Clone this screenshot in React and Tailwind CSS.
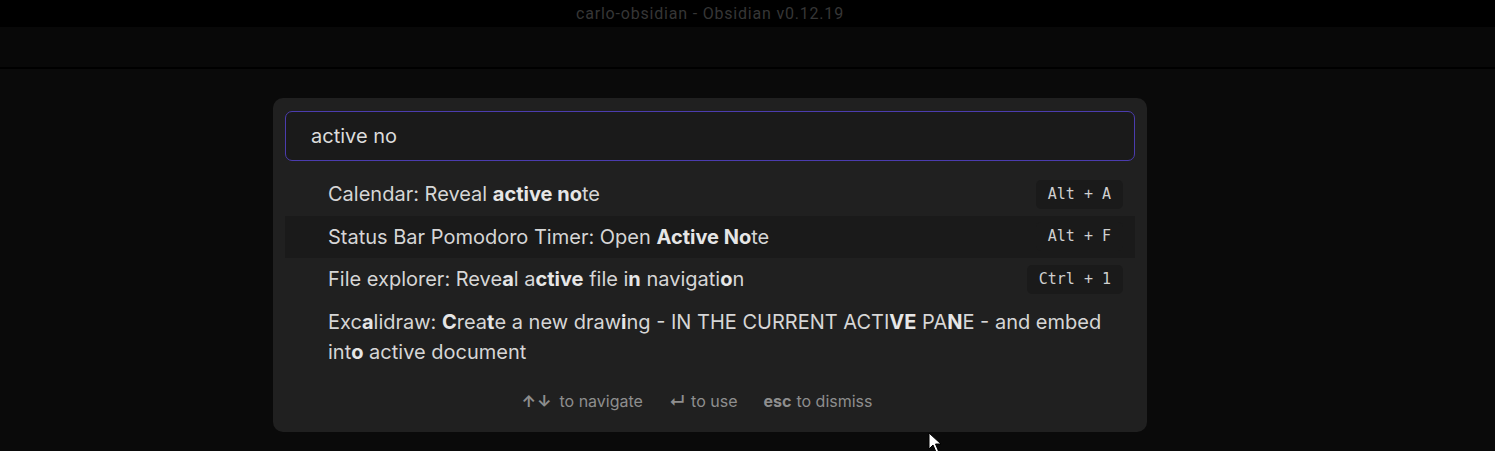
import React from "react";

const items = [
  {
    parts: [["Calendar: Reveal ", false], ["active no", true], ["te", false]],
    hotkey: "Alt + A",
  },
  {
    parts: [["Status Bar Pomodoro Timer: Open ", false], ["Active No", true], ["te", false]],
    hotkey: "Alt + F",
    selected: true,
  },
  {
    parts: [
      ["File explorer: Reve", false],
      ["a", true],
      ["l a", false],
      ["ctive", true],
      [" file i", false],
      ["n", true],
      [" navigati", false],
      ["o", true],
      ["n", false],
    ],
    hotkey: "Ctrl + 1",
  },
  {
    lines: [
      [
        ["Exc", false],
        ["a", true],
        ["lidraw: ", false],
        ["C", true],
        ["rea", false],
        ["t", true],
        ["e a new draw", false],
        ["i", true],
        ["ng - IN THE CURRENT ACTI", false],
        ["VE", true],
        [" PA", false],
        ["N", true],
        ["E - and embed", false],
      ],
      [
        ["int", false],
        ["o", true],
        [" active document", false],
      ],
    ],
  },
];

function Parts({ parts }) {
  return parts.map(([t, hl], i) =>
    hl ? (
      <span key={i} className="font-bold text-[#e6e6e6]">
        {t}
      </span>
    ) : (
      <span key={i}>{t}</span>
    )
  );
}

function Suggestion({ item }) {
  return (
    <div
      className={`flex items-center justify-between pl-[43px] pr-3 py-[6.25px] ${
        item.selected ? "bg-[#1a1a1a]" : ""
      }`}
    >
      <div className="text-[20px] leading-[30px] text-[#d6d6d6]">
        {item.lines ? (
          item.lines.map((line, i) => (
            <div key={i}>
              <Parts parts={line} />
            </div>
          ))
        ) : (
          <Parts parts={item.parts} />
        )}
      </div>
      {item.hotkey && (
        <kbd
          className="ml-6 shrink-0 rounded-[5px] bg-[#1a1a1a] px-3 py-[4px] text-[15px] leading-[21px] text-[#cfcfcf]"
          style={{ fontFamily: '"DejaVu Sans Mono", monospace' }}
        >
          {item.hotkey}
        </kbd>
      )}
    </div>
  );
}

export default function App() {
  return (
    <div
      className="relative h-[451px] w-[1495px] overflow-hidden bg-[#0a0a0a]"
      style={{ fontFamily: "Inter, 'Noto Sans', sans-serif" }}
    >
      <div className="flex h-[27px] items-center justify-center bg-black pr-[75px]">
        <span
          className="text-[16px] tracking-[0.8px] text-[#363636]"
          style={{ fontFamily: "Roboto, sans-serif" }}
        >
          carlo-obsidian - Obsidian v0.12.19
        </span>
      </div>
      <div className="h-[42px] border-b-2 border-black bg-[#080808]" />

      <div className="pt-[29px]">
        <div className="ml-[273px] w-[874px] rounded-[10px] bg-[#202020] px-3 pt-[13px]">
          <div className="flex h-[50px] items-center rounded-[7px] border border-[#4b3cae] bg-[#1a1a1a] pl-[25px]">
            <span className="text-[20px] text-[#dcdcdc]">active no</span>
          </div>
          <div className="pt-[12px]">
            {items.map((item, i) => (
              <Suggestion key={i} item={item} />
            ))}
          </div>
          <div className="flex h-[59px] items-center justify-center pb-[4px] text-[16px] text-[#8e8e8e]">
            <div className="mr-[26px] flex items-center">
              <span className="mr-[7px] font-bold tracking-[1px]">↑↓</span>
              <span>to navigate</span>
            </div>
            <div className="mr-[26px] flex items-center">
              <span className="mr-[6px] font-bold">↵</span>
              <span>to use</span>
            </div>
            <div className="mr-[26px] flex items-center">
              <span className="mr-[5px] font-bold">esc</span>
              <span>to dismiss</span>
            </div>
          </div>
        </div>
      </div>

      <svg
        className="absolute left-[928px] top-[432px]"
        width="14"
        height="22"
        viewBox="0 0 14 22"
      >
        <path
          d="M1 1 L1 17 L5 13 L8 20 L10.5 19 L7.5 12 L13 12 Z"
          fill="#fff"
          stroke="#000"
          strokeWidth="1"
          strokeLinejoin="round"
        />
      </svg>
    </div>
  );
}
